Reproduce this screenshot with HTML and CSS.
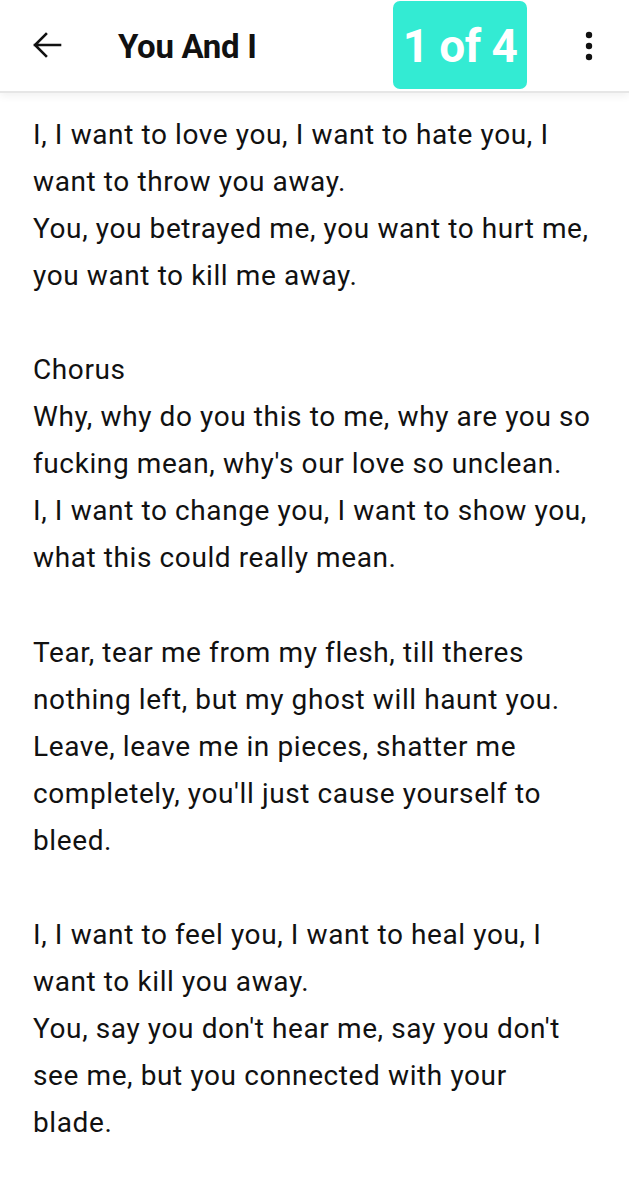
FILE: index.html
```html
<!DOCTYPE html>
<html lang="en">
<head>
<meta charset="utf-8">
<title>You And I</title>
<link rel="stylesheet" href="styles.css">
</head>
<body>
<header class="topbar">
  <button class="icon-btn back" aria-label="Back">
    <svg width="30" height="26" viewBox="0 0 30 26"><path d="M28 13H3M14 2L3 13l11 11" fill="none" stroke="#111" stroke-width="2.6" stroke-linecap="square"/></svg>
  </button>
  <h1 class="title">You And I</h1>
  <div class="badge">1 of 4</div>
  <button class="icon-btn more" aria-label="More">
    <svg width="8" height="30" viewBox="0 0 8 30"><circle cx="4" cy="4" r="3.2" fill="#111"/><circle cx="4" cy="15" r="3.2" fill="#111"/><circle cx="4" cy="26" r="3.2" fill="#111"/></svg>
  </button>
</header>
<main class="lyrics">
  <p>I, I want to love you, I want to hate you, I<br>want to throw you away.<br>You, you betrayed me, you want to hurt me,<br>you want to kill me away.</p>
  <p>Chorus<br>Why, why do you this to me, why are you so<br>fucking mean, why's our love so unclean.<br>I, I want to change you, I want to show you,<br>what this could really mean.</p>
  <p>Tear, tear me from my flesh, till theres<br>nothing left, but my ghost will haunt you.<br>Leave, leave me in pieces, shatter me<br>completely, you'll just cause yourself to<br>bleed.</p>
  <p>I, I want to feel you, I want to heal you, I<br>want to kill you away.<br>You, say you don't hear me, say you don't<br>see me, but you connected with your<br>blade.</p>
</main>
</body>
</html>
```
FILE: styles.css
```css
* { box-sizing: border-box; }
html, body { margin: 0; padding: 0; background: #fff; }
body { font-family: Roboto, "Noto Sans", "Liberation Sans", sans-serif; color: #111; width: 629px; }

.topbar {
  height: 93px;
  display: flex;
  align-items: center;
  background: #fff;
  border-bottom: 2px solid #e6e6e6;
  box-shadow: 0 3px 8px rgba(0,0,0,0.06);
  position: relative;
}
.icon-btn {
  background: none; border: 0; padding: 0; margin: 0;
  display: flex; align-items: center; justify-content: center;
}
.back { margin-left: 32px; width: 30px; height: 40px; margin-top: -1px; }
.title {
  margin: 0 0 0 56px;
  font-size: 33px;
  font-weight: 700;
  letter-spacing: -0.3px;
  color: #111;
  flex: 1;
  margin-top: 2px;
}
.badge {
  align-self: flex-start;
  margin-top: 1px;
  width: 134px;
  height: 88px;
  background: #33ebd3;
  border-radius: 7px;
  color: #fff;
  font-weight: 700;
  font-size: 46px;
  letter-spacing: -0.6px;
  display: flex; align-items: center; justify-content: center;
  padding-top: 2px;
}
.more { width: 8px; height: 40px; margin-left: 58px; margin-right: 36px; }

.lyrics {
  padding: 18px 0 0 33px;
  font-size: 28px;
  letter-spacing: 0.6px;
  line-height: 47.05px;
  white-space: nowrap;
}
.lyrics p { margin: 0 0 47.05px 0; }
```
